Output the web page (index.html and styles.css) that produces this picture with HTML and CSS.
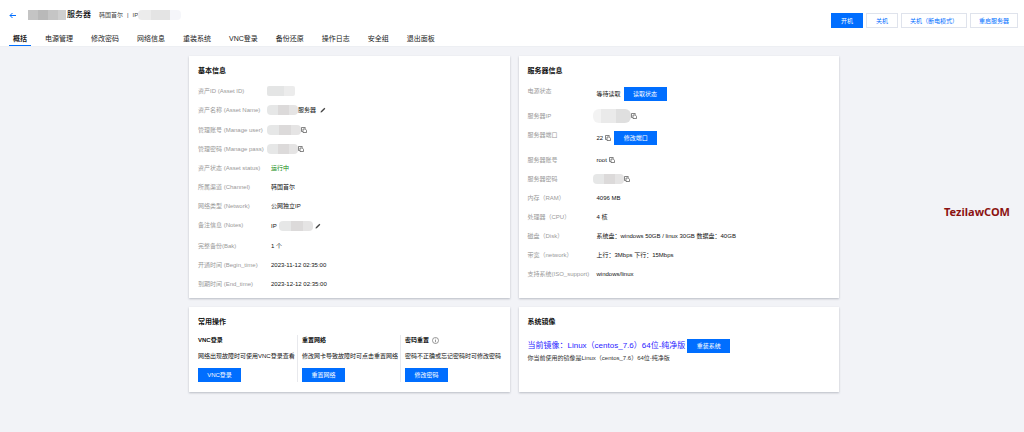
FILE: index.html
```html
<!DOCTYPE html>
<html lang="zh-CN">
<head>
<meta charset="utf-8">
<title>服务器管理</title>
<meta name="viewport" content="width=device-width, initial-scale=1">
<link rel="stylesheet" href="styles.css">
</head>
<body>
<svg class="sprite" aria-hidden="true">
  <symbol id="copy" viewBox="0 0 12 12"><path d="M8.5 3.5V1H1v8h2.500M4 4h4.500L11 6.500V11H4z" fill="none" stroke="currentColor" stroke-width="1.300"/></symbol>
  <symbol id="edit" viewBox="0 0 12 12"><path d="M1 11l.6-2.600L8.800 1.500l1.800 1.800L3.600 10.400z" fill="currentColor"/></symbol>
</svg>
<header class="header">
  <div class="header-main">
    <div class="title-bar">
      <a class="back" href="#" aria-label="返回"><svg viewBox="0 0 14 12"><path d="M14 6H2M7 1L2 6l5 5" fill="none" stroke="currentColor" stroke-width="2"/></svg></a>
      <h1 class="title"><span class="mask mask-title"></span>服务器</h1>
      <span class="meta">韩国首尔</span><span class="meta-sep">|</span><span class="meta">IP</span><span class="mask mask-meta"></span>
    </div>
    <nav class="tabs">
      <a class="tab active" href="#">概括</a>
      <a class="tab" href="#">电源管理</a>
      <a class="tab" href="#">修改密码</a>
      <a class="tab" href="#">网络信息</a>
      <a class="tab" href="#">重装系统</a>
      <a class="tab" href="#">VNC登录</a>
      <a class="tab" href="#">备份还原</a>
      <a class="tab" href="#">操作日志</a>
      <a class="tab" href="#">安全组</a>
      <a class="tab" href="#">退出面板</a>
    </nav>
  </div>
  <div class="actions">
    <button class="action primary">开机</button>
    <button class="action">关机</button>
    <button class="action">关机（断电模式）</button>
    <button class="action">重启服务器</button>
  </div>
</header>
<main class="main">
  <div class="grid">
    <section class="card">
      <h2 class="card-title">基本信息</h2>
      <dl class="list">
        <div class="row"><dt>资产ID (Asset ID)</dt><dd><span class="mask mask-s"></span></dd></div>
        <div class="row editable"><dt>资产名称 (Asset Name)</dt><dd><span class="mask mask-m"></span>服务器<button class="icon edit" aria-label="编辑名称"><svg><use href="#edit"/></svg></button></dd></div>
        <div class="row"><dt>管理账号 (Manage user)</dt><dd><span class="mask mask-l"></span><button class="icon" aria-label="复制账号"><svg><use href="#copy"/></svg></button></dd></div>
        <div class="row"><dt>管理密码 (Manage pass)</dt><dd><span class="mask mask-m"></span><button class="icon" aria-label="复制密码"><svg><use href="#copy"/></svg></button></dd></div>
        <div class="row"><dt>资产状态 (Asset status)</dt><dd class="text running">运行中</dd></div>
        <div class="row"><dt>所属渠道 (Channel)</dt><dd class="text">韩国首尔</dd></div>
        <div class="row"><dt>网络类型 (Network)</dt><dd class="text">公网独立IP</dd></div>
        <div class="row editable"><dt>备注信息 (Notes)</dt><dd class="text"><span class="note">IP</span><span class="mask mask-l"></span><button class="icon edit-note" aria-label="编辑备注"><svg><use href="#edit"/></svg></button></dd></div>
        <div class="row"><dt>完整备份(Bak)</dt><dd class="text">1 个</dd></div>
        <div class="row"><dt>开通时间 (Begin_time)</dt><dd class="text">2023-11-12 02:35:00</dd></div>
        <div class="row"><dt>到期时间 (End_time)</dt><dd class="text">2023-12-12 02:35:00</dd></div>
      </dl>
    </section>
    <section class="card">
      <h2 class="card-title">服务器信息</h2>
      <dl class="list server">
        <div class="row tall"><dt>电源状态</dt><dd class="text">等待读取<button class="btn">读取状态</button></dd></div>
        <div class="row"><dt>服务器IP</dt><dd><span class="mask mask-ip"></span><button class="icon" aria-label="复制IP"><svg><use href="#copy"/></svg></button></dd></div>
        <div class="row tall"><dt>服务器端口</dt><dd class="text">22<button class="icon copy-text" aria-label="复制端口"><svg><use href="#copy"/></svg></button><button class="btn">修改端口</button></dd></div>
        <div class="row"><dt>服务器账号</dt><dd class="text">root<button class="icon copy-text" aria-label="复制服务器账号"><svg><use href="#copy"/></svg></button></dd></div>
        <div class="row"><dt>服务器密码</dt><dd><span class="mask mask-m"></span><button class="icon" aria-label="复制服务器密码"><svg><use href="#copy"/></svg></button></dd></div>
        <div class="row"><dt>内存（RAM）</dt><dd class="text">4096 MB</dd></div>
        <div class="row"><dt>处理器（CPU）</dt><dd class="text">4 核</dd></div>
        <div class="row"><dt>磁盘（Disk）</dt><dd class="text">系统盘：windows 50GB / linux 30GB 数据盘：40GB</dd></div>
        <div class="row"><dt>带宽（network）</dt><dd class="text">上行：3Mbps 下行：15Mbps</dd></div>
        <div class="row"><dt>支持系统(ISO_support)</dt><dd class="text">windows/linux</dd></div>
      </dl>
    </section>
    <section class="card">
      <h2 class="card-title">常用操作</h2>
      <div class="ops">
        <div class="op">
          <h3 class="op-title">VNC登录</h3>
          <p class="op-text">网络出现故障时可使用VNC登录查看</p>
          <button class="btn">VNC登录</button>
        </div>
        <div class="op">
          <h3 class="op-title">重置网络</h3>
          <p class="op-text">修改网卡导致故障时可点击重置网络</p>
          <button class="btn">重置网络</button>
        </div>
        <div class="op">
          <h3 class="op-title">密码重置<svg class="info" viewBox="0 0 12 12"><circle cx="6" cy="6" r="5.200" fill="none" stroke="currentColor"/><path d="M6 5v4M6 2.800v1.200" stroke="currentColor"/></svg></h3>
          <p class="op-text">密码不正确或忘记密码时可修改密码</p>
          <button class="btn">修改密码</button>
        </div>
      </div>
    </section>
    <section class="card">
      <h2 class="card-title">系统镜像</h2>
      <div class="image-row"><span class="image-name">当前镜像：Linux（centos_7.6）64位-纯净版</span><button class="btn">重装系统</button></div>
      <p class="image-text">你当前使用的镜像是Linux（centos_7.6）64位-纯净版</p>
    </section>
  </div>
</main>
<div class="watermark">TezilawCOM</div>
</body>
</html>
```
FILE: styles.css
```css
* { box-sizing: border-box; margin: 0; padding: 0; }
body {
  min-height: 100vh;
  background: #f2f3f7;
  color: #111;
  font: 6px/10px "Liberation Sans", "Noto Sans CJK SC", sans-serif;
}
button { border: 0; background: none; font: inherit; cursor: pointer; }
a { color: inherit; text-decoration: none; }
.sprite { display: none; }

.header { display: flex; justify-content: space-between; background: #fff; box-shadow: 0 0 1px #d5d8df; }
.header-main { padding: 9px 0 0 9px; }
.title-bar { display: flex; align-items: center; height: 12px; }
.back { display: flex; width: 19px; color: #006eff; }
.back svg { width: 7px; height: 7px; }
.title { display: flex; align-items: center; gap: 1px; margin-right: 8px; font-size: 8px; font-weight: 500; }
.meta { color: #444; }
.meta-sep { margin: 0 4px; color: #444; }

.mask { display: block; flex: none; height: 10px; border-radius: 4px; background: linear-gradient(90deg, #e6e7e7 0 35%, #dcdada 35% 70%, #e5e4e4 70%); }
.mask-title { width: 38px; border-radius: 0; background: linear-gradient(90deg, #c4c4c4 0 26%, #b9b9b9 26% 52%, #c5c5c5 52% 78%, #cfcfcf 78%); }
.mask-meta { width: 43px; background: linear-gradient(90deg, #ececec 0 30%, #e4e4e4 30% 75%, #f5f6fa 75%); }
.mask-s { width: 28px; border-radius: 2px; background: linear-gradient(90deg, #e4e5e5 0 60%, #ececec 60%); }
.mask-m { width: 31px; }
.mask-l { width: 34px; }
.mask-ip { width: 38px; height: 14px; border-radius: 6px; background: linear-gradient(90deg, #f3f3f3 0 20%, #eaeaea 20% 60%, #dfdfdf 60%); }

.tabs { display: flex; gap: 10px; margin-top: 12px; }
.tab { padding: 0 4px 2px; height: 13px; font-size: 7px; line-height: 12px; color: #222; white-space: nowrap; }
.tab.active { font-weight: 700; border-bottom: 1px solid #006eff; }

.actions { display: flex; align-items: flex-start; gap: 3px; padding: 13px 6px 0; }
.action { height: 15px; padding: 0 8px; min-width: 32px; border: 1px solid #dfe3ec; background: #fff; color: #006eff; white-space: nowrap; }
.action.primary { border-color: #006eff; background: #006eff; color: #fff; }

.main { padding: 10px 0 10px 4px; }
.grid { display: grid; grid-template-columns: 1fr 1fr; gap: 9px; max-width: 650px; margin: 0 auto; }
.card { min-width: 0; padding: 9px 9px 5px; background: #fff; box-shadow: 0 1px 2px rgba(54, 58, 80, .3); }
.card-title { height: 10px; margin-bottom: 6px; font-size: 7px; line-height: 11px; }

.row { display: flex; height: 19px; }
.row.editable { height: 20px; }
.row.editable ~ .row.editable { height: 21px; }
.row.tall { height: 25px; }
.row dt { flex: none; width: 69px; line-height: 20px; color: #999; white-space: nowrap; }
.server .row dt { width: 65px; }
.row dd { display: flex; align-items: center; white-space: nowrap; }
.row .text { padding-left: 4px; }
.row .running { color: #0a8a0a; }
.note { margin-right: 2px; }
.btn { width: 43px; height: 14px; background: #006eff; color: #fff; white-space: nowrap; }
.row .btn { margin-left: 3px; }
.icon { display: flex; color: #444; }
.icon svg { width: 6px; height: 6px; }
.edit { margin-left: 4px; }
.edit-note, .copy-text { margin-left: 2px; }

.ops { display: grid; grid-template-columns: 99px 103px 1fr; margin-top: 9px; padding-bottom: 5px; }
.op { white-space: nowrap; }
.op + .op { padding-left: 4px; border-left: 1px solid #e8e9ed; }
.op-title { display: flex; align-items: center; gap: 3px; height: 10px; font-size: 6px; }
.op-text { margin: 6px 0 7px; }
.op .btn { display: block; }
.info { width: 7px; height: 7px; color: #555; }

.image-row { display: flex; align-items: center; gap: 2px; margin-top: 13px; }
.image-name { font-size: 8px; color: #2a1cff; white-space: nowrap; }
.image-text { color: #333; }

.watermark { position: absolute; top: 205px; right: 14px; color: #8b1212; font: 700 11px/14px "Noto Sans", sans-serif; }
```
